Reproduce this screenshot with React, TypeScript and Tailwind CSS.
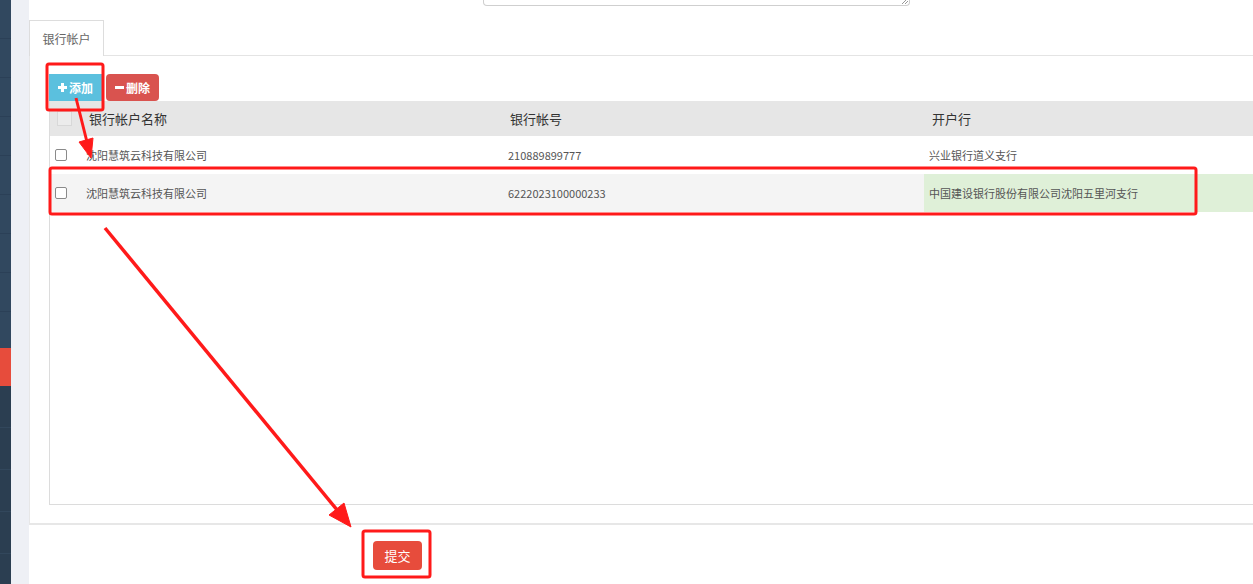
import React from "react";

const rows = [
  { name: "沈阳慧筑云科技有限公司", no: "210889899777", bank: "兴业银行道义支行", hl: false },
  { name: "沈阳慧筑云科技有限公司", no: "6222023100000233", bank: "中国建设银行股份有限公司沈阳五里河支行", hl: true },
];

function Sidebar() {
  const top = [0, 1, 2, 3, 4, 5, 6, 7];
  const bottom = [0, 1, 2, 3, 4];
  return (
    <div className="w-[11px] shrink-0 flex flex-col bg-[#2b3e51]">
      {top.map((i) => (
        <div key={i} className="h-[39px] shrink-0 bg-[#31485f] border-b border-[#2b4057]" />
      ))}
      <div className="h-[36px] shrink-0 bg-[#31485f]" />
      <div className="h-[38px] shrink-0 bg-[#e74c3c]" />
      {bottom.map((i) => (
        <div key={i} className="h-[42px] shrink-0 border-b border-[#32475c]" />
      ))}
    </div>
  );
}

function Annotations() {
  return (
    <svg className="absolute inset-0 pointer-events-none" width="1253" height="584">
      <g fill="none" stroke="#ff1a1a" strokeWidth="3">
        <rect x="47" y="64" width="56" height="46" rx="2" />
        <rect x="50" y="168" width="1146" height="46" rx="2" />
        <rect x="363" y="531" width="67" height="46" rx="2" />
      </g>
      <g fill="#ff1a1a" stroke="#ff1a1a">
        <line x1="76" y1="98" x2="87" y2="142" strokeWidth="3" />
        <polygon points="79,142 93,138 91,158" />
        <line x1="105" y1="228" x2="338" y2="511" strokeWidth="3.5" />
        <polygon points="329,515 344,503 351,527" />
      </g>
    </svg>
  );
}

export default function App() {
  return (
    <div
      className="relative w-[1253px] h-[584px] overflow-hidden flex bg-white"
      style={{ fontFamily: '"Microsoft YaHei", "Noto Sans CJK SC", "Open Sans", sans-serif' }}
    >
      <Sidebar />
      <div className="w-[18px] shrink-0 bg-[#eef0f5]" />
      <div className="flex-1 min-w-0 flex flex-col">
        <div className="h-[20px] shrink-0">
          <div className="ml-[454px] w-[427px] h-[6px] border border-t-0 border-[#cfcfcf] rounded-b-sm relative">
            <svg className="absolute right-[1px] bottom-[1px]" width="6" height="6">
              <line x1="0" y1="6" x2="6" y2="0" stroke="#999" strokeWidth="1" />
              <line x1="3" y1="6" x2="6" y2="3" stroke="#999" strokeWidth="1" />
            </svg>
          </div>
        </div>
        <div className="flex h-[36px] shrink-0">
          <div className="w-[75px] border border-b-0 border-[#dddddd] bg-white flex items-center justify-center text-[12px] text-[#666]">
            银行帐户
          </div>
          <div className="flex-1 border-b border-[#e4e4e4]" />
        </div>
        <div className="flex flex-col border-l border-b-2 border-[#e7e7e7] pl-[19px] pt-[18px] pb-[18px] h-[469px] shrink-0">
          <div className="flex gap-[4px] h-[27px]">
            <button className="w-[53px] h-[27px] bg-[#5bc0de] text-white text-[12px] font-bold flex items-center justify-center gap-[2px]">
              <svg width="9" height="9" viewBox="0 0 9 9">
                <rect x="3" y="0" width="3" height="9" fill="#fff" />
                <rect x="0" y="3" width="9" height="3" fill="#fff" />
              </svg>
              添加
            </button>
            <button className="w-[53px] h-[27px] bg-[#d9534f] text-white text-[12px] font-bold flex items-center justify-center gap-[2px] rounded-sm">
              <span className="inline-block w-[9px] h-[3px] bg-white" />删除
            </button>
          </div>
          <div className="w-[1300px] flex-1 border-l border-b border-[#dcdcdc]">
            <div className="flex h-[35px] bg-[#e6e6e6] text-[13px] text-[#333] items-center">
              <div className="w-[31px] pl-[7px]">
                <div className="w-[15px] h-[15px] border border-[#d8d8d8] bg-[#ececec]" />
              </div>
              <div className="w-[421px] pl-[8px]">银行帐户名称</div>
              <div className="w-[422px] pl-[8px]">银行帐号</div>
              <div className="w-[422px] pl-[8px]">开户行</div>
            </div>
            {rows.map((r, i) => (
              <div
                key={i}
                className={`flex h-[38px] text-[11px] text-[#555] items-stretch ${r.hl ? "bg-[#f4f4f4]" : "bg-white"}`}
              >
                <div className="w-[31px] pl-[5px] flex items-center">
                  <div className="w-[12px] h-[12px] border border-[#8a8a8a] rounded-[2px] bg-white" />
                </div>
                <div className="w-[421px] pl-[5px] flex items-center">{r.name}</div>
                <div className="w-[422px] pl-[6px] flex items-center">{r.no}</div>
                <div className={`w-[422px] pl-[5px] flex items-center ${r.hl ? "bg-[#dff0d8]" : ""}`}>{r.bank}</div>
              </div>
            ))}
          </div>
        </div>
        <div className="pl-[344px] pt-[16px]">
          <button className="w-[49px] h-[29px] bg-[#e74c3c] text-white text-[13px] rounded-sm">提交</button>
        </div>
      </div>
      <Annotations />
    </div>
  );
}
